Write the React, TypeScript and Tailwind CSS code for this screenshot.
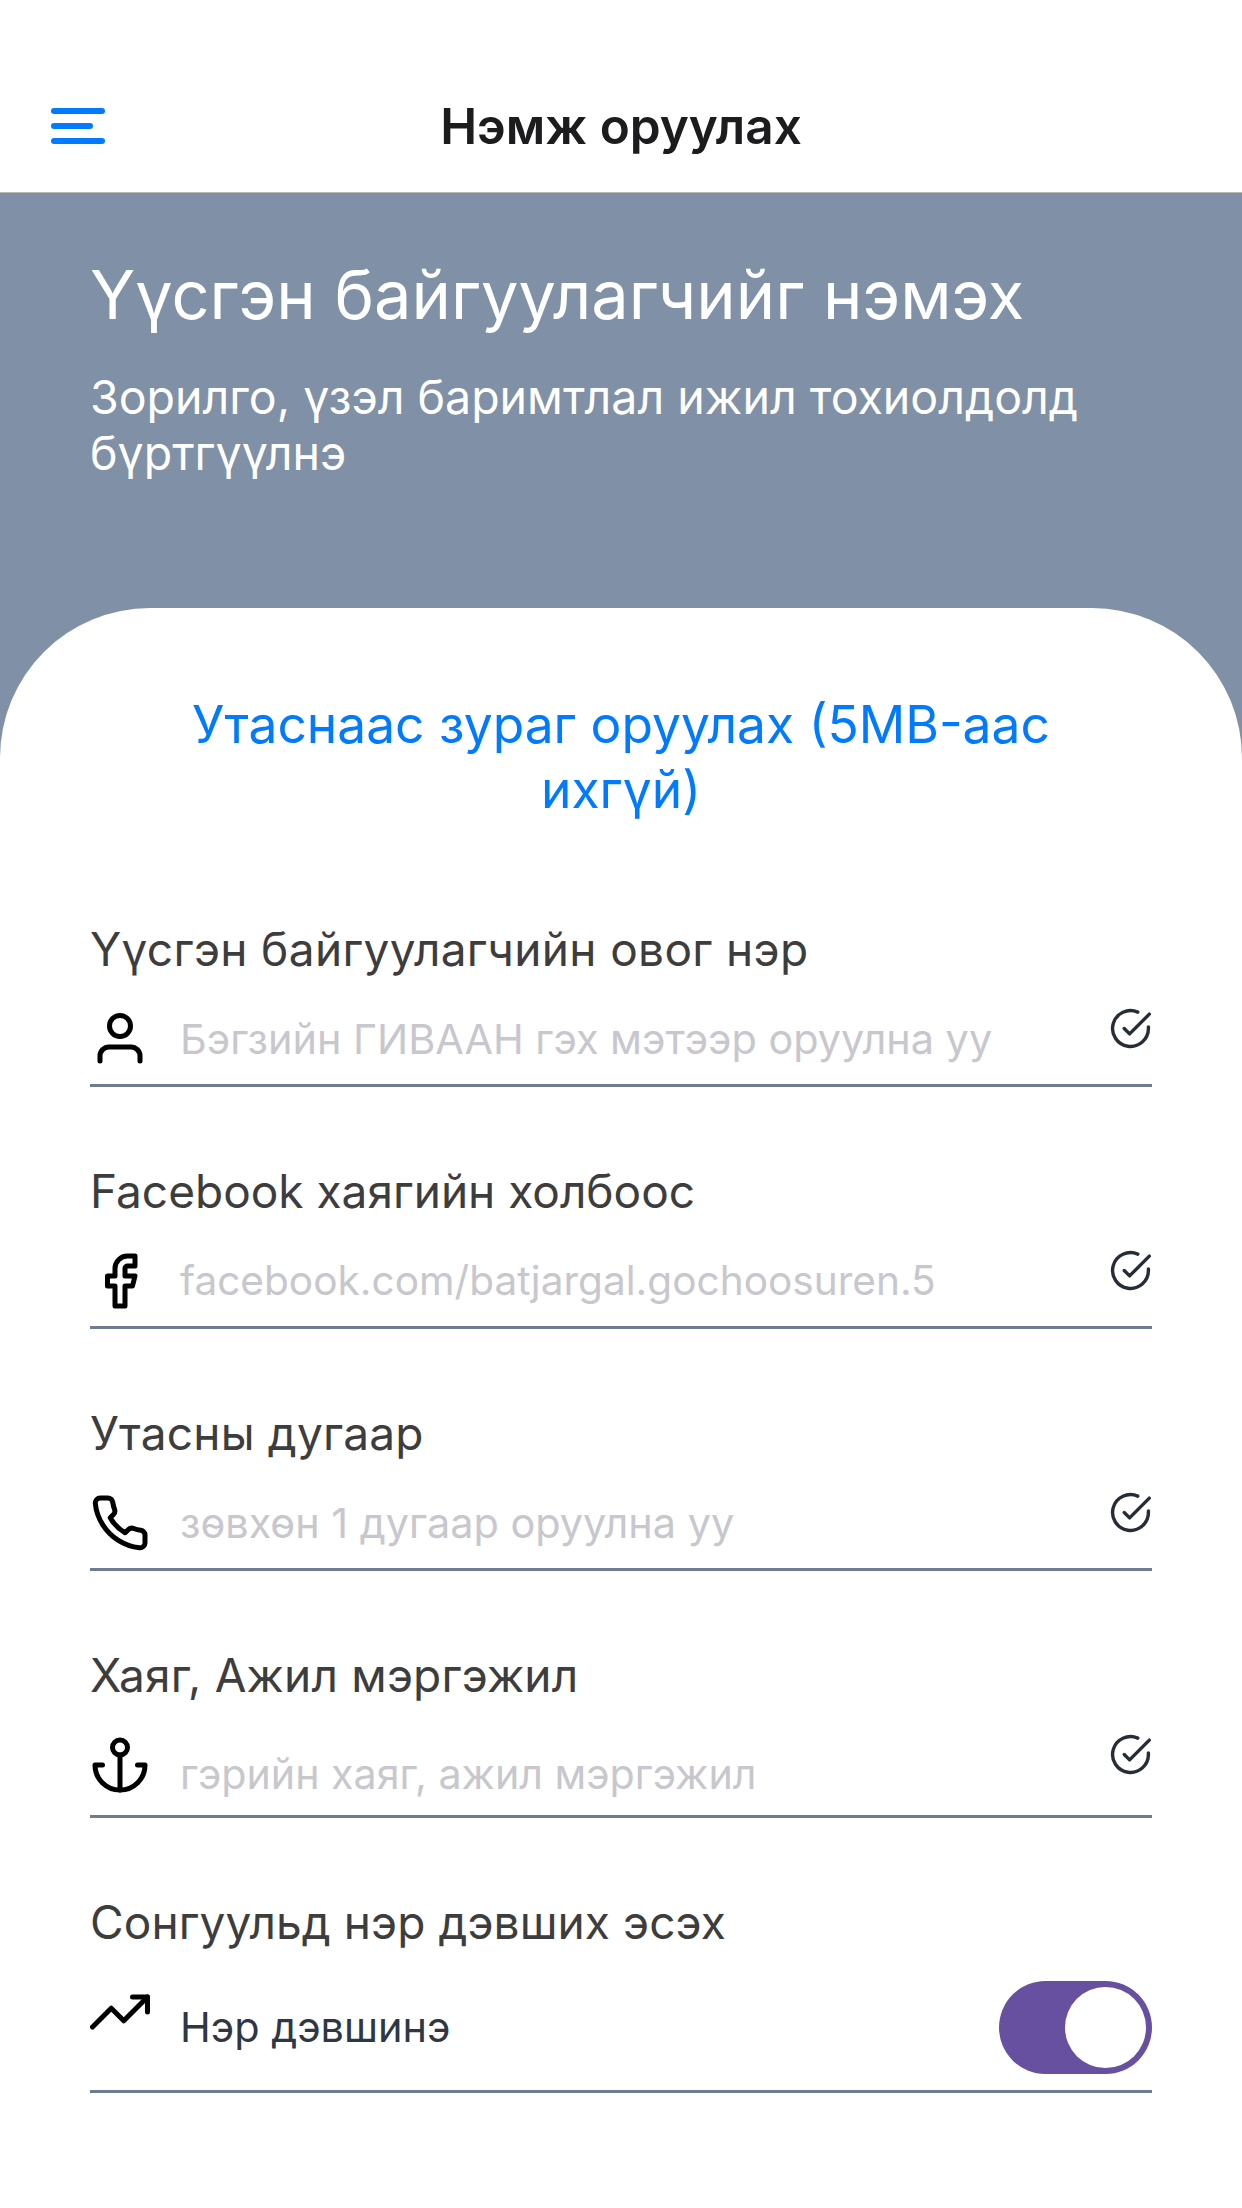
const inter = "font-['Inter',_'Noto_Sans',sans-serif]";

function Svg({ size, children, sw = 2, color = "#000" }: { size: number; children: React.ReactNode; sw?: number; color?: string }) {
  return (
    <svg width={size} height={size} viewBox="0 0 24 24" fill="none" stroke={color} strokeWidth={sw} strokeLinecap="round" strokeLinejoin="round">
      {children}
    </svg>
  );
}

function Check() {
  return (
    <Svg size={43} color="#262d36" sw={1.9}>
      <path d="M22 11.08V12a10 10 0 1 1-5.93-9.14" />
      <path d="M22.5 4 11.5 15.01l-3-3" />
    </Svg>
  );
}

const icons: Record<string, React.ReactNode> = {
  user: (
    <svg width="60" height="60" viewBox="0 0 60 60" fill="none" stroke="#000" strokeWidth="5" strokeLinecap="round" strokeLinejoin="round">
      <circle cx="30" cy="14" r="10.5" />
      <path d="M10 49v-5a9 9 0 0 1 9-9h22a9 9 0 0 1 9 9v5" />
    </svg>
  ),
  fb: (
    <Svg size={60}>
      <path d="M18 2h-3a5 5 0 0 0-5 5v3H7v4h3v8h4v-8h3l1-4h-4V7a1 1 0 0 1 1-1h3z" />
    </Svg>
  ),
  phone: (
    <Svg size={60}>
      <path d="M22 16.92v3a2 2 0 0 1-2.18 2 19.79 19.79 0 0 1-8.63-3.07 19.5 19.5 0 0 1-6-6 19.79 19.79 0 0 1-3.07-8.67A2 2 0 0 1 4.11 2h3a2 2 0 0 1 2 1.72 12.84 12.84 0 0 0 .7 2.81 2 2 0 0 1-.45 2.11L8.09 9.91a16 16 0 0 0 6 6l1.27-1.27a2 2 0 0 1 2.11-.45 12.84 12.84 0 0 0 2.81.7A2 2 0 0 1 22 16.92z" />
    </Svg>
  ),
  anchor: (
    <Svg size={60}>
      <circle cx="12" cy="5" r="3" />
      <line x1="12" y1="22" x2="12" y2="8" />
      <path d="M5 12H2a10 10 0 0 0 20 0h-3" />
    </Svg>
  ),
};

function Field({ label, ph, icon, h, textPt, iconPt, mt, size, track }: { label: string; ph: string; icon: string; h: string; textPt: string; iconPt: string; mt: string; size: string; track: string }) {
  return (
    <div className={mt}>
      <div className={`text-[46px] leading-[60px] text-[#3d3d3d] ${track}`}>{label}</div>
      <div className={`flex border-b-[3px] border-[#6e7d92] ${h}`}>
        <div className={`w-[60px] shrink-0 ${iconPt}`}>{icons[icon]}</div>
        <div className={`ml-[30px] flex-1 leading-[50px] text-[#c7c7cd] ${size} ${textPt}`}>{ph}</div>
        <div className="w-[43px] shrink-0 flex justify-end pt-[28px]"><Check /></div>
      </div>
    </div>
  );
}

export default function App() {
  return (
    <div className={`w-[1242px] h-[2208px] bg-white overflow-hidden ${inter}`}>
      <header className="h-[193px] border-b border-[#b9b9b9] bg-white relative flex items-center justify-center pt-[60px]">
        <div className="absolute left-[51px] top-[108px] flex flex-col gap-[9px]">
          <div className="w-[54px] h-[6px] rounded-full bg-[#007aff]" />
          <div className="w-[42px] h-[6px] rounded-full bg-[#007aff]" />
          <div className="w-[54px] h-[6px] rounded-full bg-[#007aff]" />
        </div>
        <div className="text-[49.5px] font-semibold text-[#1c1c1e] leading-[60px]">Нэмж оруулах</div>
      </header>
      <div className="bg-[#8090a6]">
        <div className="h-[415px] px-[90px] pt-[62px] text-white">
          <div className="text-[66.7px] leading-[80px]">Үүсгэн байгуулагчийг нэмэх</div>
          <div className="text-[46.5px] leading-[56px] mt-[34px]">
            Зорилго, үзэл баримтлал ижил тохиолдолд<br />бүртгүүлнэ
          </div>
        </div>
        <div className="bg-white rounded-t-[150px] h-[1600px] px-[90px]">
          <div className="pt-[84px] text-center text-[#007aff] text-[51.5px] leading-[65px]">
            Утаснаас зураг оруулах (5MB-аас<br />ихгүй)
          </div>
          <Field mt="mt-[97px]" track="tracking-[0.35px]" size="text-[41.4px]" label="Үүсгэн байгуулагчийн овог нэр" ph="Бэгзийн ГИВААН гэх мэтээр оруулна уу" icon="user" h="h-[108px]" iconPt="pt-[33px]" textPt="pt-[35px]" />
          <Field mt="mt-[74px]" track="tracking-normal" size="text-[40.6px]" label="Facebook хаягийн холбоос" ph="facebook.com/batjargal.gochoosuren.5" icon="fb" h="h-[108px]" iconPt="pt-[30px]" textPt="pt-[35px]" />
          <Field mt="mt-[74px]" track="tracking-[0.2px]" size="text-[41.4px]" label="Утасны дугаар" ph="зөвхөн 1 дугаар оруулна уу" icon="phone" h="h-[108px]" iconPt="pt-[30px]" textPt="pt-[35px]" />
          <Field mt="mt-[74px]" track="tracking-[0.2px]" size="text-[41.2px]" label="Хаяг, Ажил мэргэжил" ph="гэрийн хаяг, ажил мэргэжил" icon="anchor" h="h-[113px]" iconPt="pt-[30px]" textPt="pt-[44px]" />
          <div className="mt-[74px]">
            <div className="text-[46px] tracking-[0.1px] leading-[60px] text-[#3d3d3d]">Сонгуульд нэр дэвших эсэх</div>
            <div className="flex border-b-[3px] border-[#6e7d92] h-[141px]">
              <div className="w-[60px] shrink-0 pt-[30px]">
                <Svg size={60}>
                  <polyline points="23 6 13.5 15.5 8.5 10.5 1 18" />
                  <polyline points="17 6 23 6 23 12" />
                </Svg>
              </div>
              <div className="ml-[30px] flex-1 text-[41.4px] leading-[50px] text-[#2e3744] pt-[50px]">Нэр дэвшинэ</div>
              <div className="w-[153px] h-[93px] rounded-full bg-[#67509f] mt-[29px] flex justify-end items-center pr-[6px]">
                <div className="w-[81px] h-[81px] rounded-full bg-white" />
              </div>
            </div>
          </div>
        </div>
      </div>
    </div>
  );
}
